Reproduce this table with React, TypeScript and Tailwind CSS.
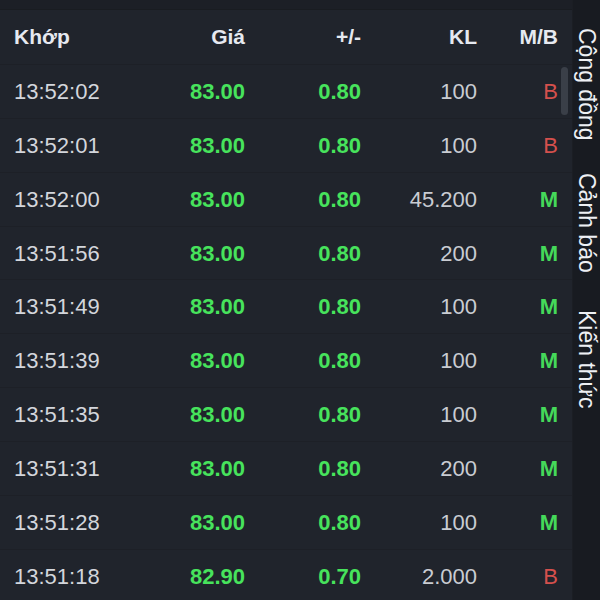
import React from 'react';

type Trade = {
  time: string;
  price: string;
  change: string;
  volume: string;
  side: 'M' | 'B';
};

const trades: Trade[] = [
  { time: '13:52:02', price: '83.00', change: '0.80', volume: '100', side: 'B' },
  { time: '13:52:01', price: '83.00', change: '0.80', volume: '100', side: 'B' },
  { time: '13:52:00', price: '83.00', change: '0.80', volume: '45.200', side: 'M' },
  { time: '13:51:56', price: '83.00', change: '0.80', volume: '200', side: 'M' },
  { time: '13:51:49', price: '83.00', change: '0.80', volume: '100', side: 'M' },
  { time: '13:51:39', price: '83.00', change: '0.80', volume: '100', side: 'M' },
  { time: '13:51:35', price: '83.00', change: '0.80', volume: '100', side: 'M' },
  { time: '13:51:31', price: '83.00', change: '0.80', volume: '200', side: 'M' },
  { time: '13:51:28', price: '83.00', change: '0.80', volume: '100', side: 'M' },
  { time: '13:51:18', price: '82.90', change: '0.70', volume: '2.000', side: 'B' },
];

const tabs = [
  { label: 'Cộng đồng', gap: 'mt-0' },
  { label: 'Cảnh báo', gap: 'mt-[32px]' },
  { label: 'Kiến thức', gap: 'mt-[38px]' },
];

export default function App() {
  return (
    <div className="flex h-[600px] w-[600px] overflow-hidden bg-[#20242c] font-['Liberation_Sans',Arial,sans-serif]">
      {/* Matched trades */}
      <div className="relative flex flex-1 flex-col">
        <div className="h-[10px] shrink-0 border-b border-[#191c21] bg-[#1c1f26]" />

        {/* Header */}
        <div className="grid h-[55px] shrink-0 grid-cols-[136px_95px_116px_116px_81px] items-center border-b border-[#1d2027] pl-[14px] text-[21px] font-bold text-[#e6e9f0]">
          <span>Khớp</span>
          <span className="text-right">Giá</span>
          <span className="text-right">+/-</span>
          <span className="text-right">KL</span>
          <span className="text-right">M/B</span>
        </div>

        {/* Rows */}
        {trades.map((t, i) => (
          <div
            key={i}
            className="grid h-[53.87px] shrink-0 grid-cols-[136px_95px_116px_116px_81px] items-center border-b border-[#1d2027] pl-[14px] text-[22px]"
          >
            <span className="text-[#d3d6dc]">{t.time}</span>
            <span className="text-right font-bold text-[#47e35c]">{t.price}</span>
            <span className="text-right font-bold text-[#47e35c]">{t.change}</span>
            <span className="text-right text-[#c9ccd2]">{t.volume}</span>
            <span className={`text-right ${t.side === 'M' ? 'font-bold text-[#45d95a]' : 'text-[#d4504d]'}`}>
              {t.side}
            </span>
          </div>
        ))}

        {/* Scrollbar thumb */}
        <div className="absolute left-[561px] top-[67px] h-[48px] w-[7px] rounded-full bg-[#3a3f48]" />
      </div>

      {/* Side tabs */}
      <div className="flex w-[28px] shrink-0 flex-col border-l border-[#1b1e24] bg-[#181b21] pt-[28px] text-[23px] text-[#eef0f4]">
        {tabs.map((tab) => (
          <div key={tab.label} className={`flex items-center justify-center ${tab.gap}`}>
            <span className="[writing-mode:vertical-rl] leading-[28px]">{tab.label}</span>
          </div>
        ))}
      </div>
    </div>
  );
}
